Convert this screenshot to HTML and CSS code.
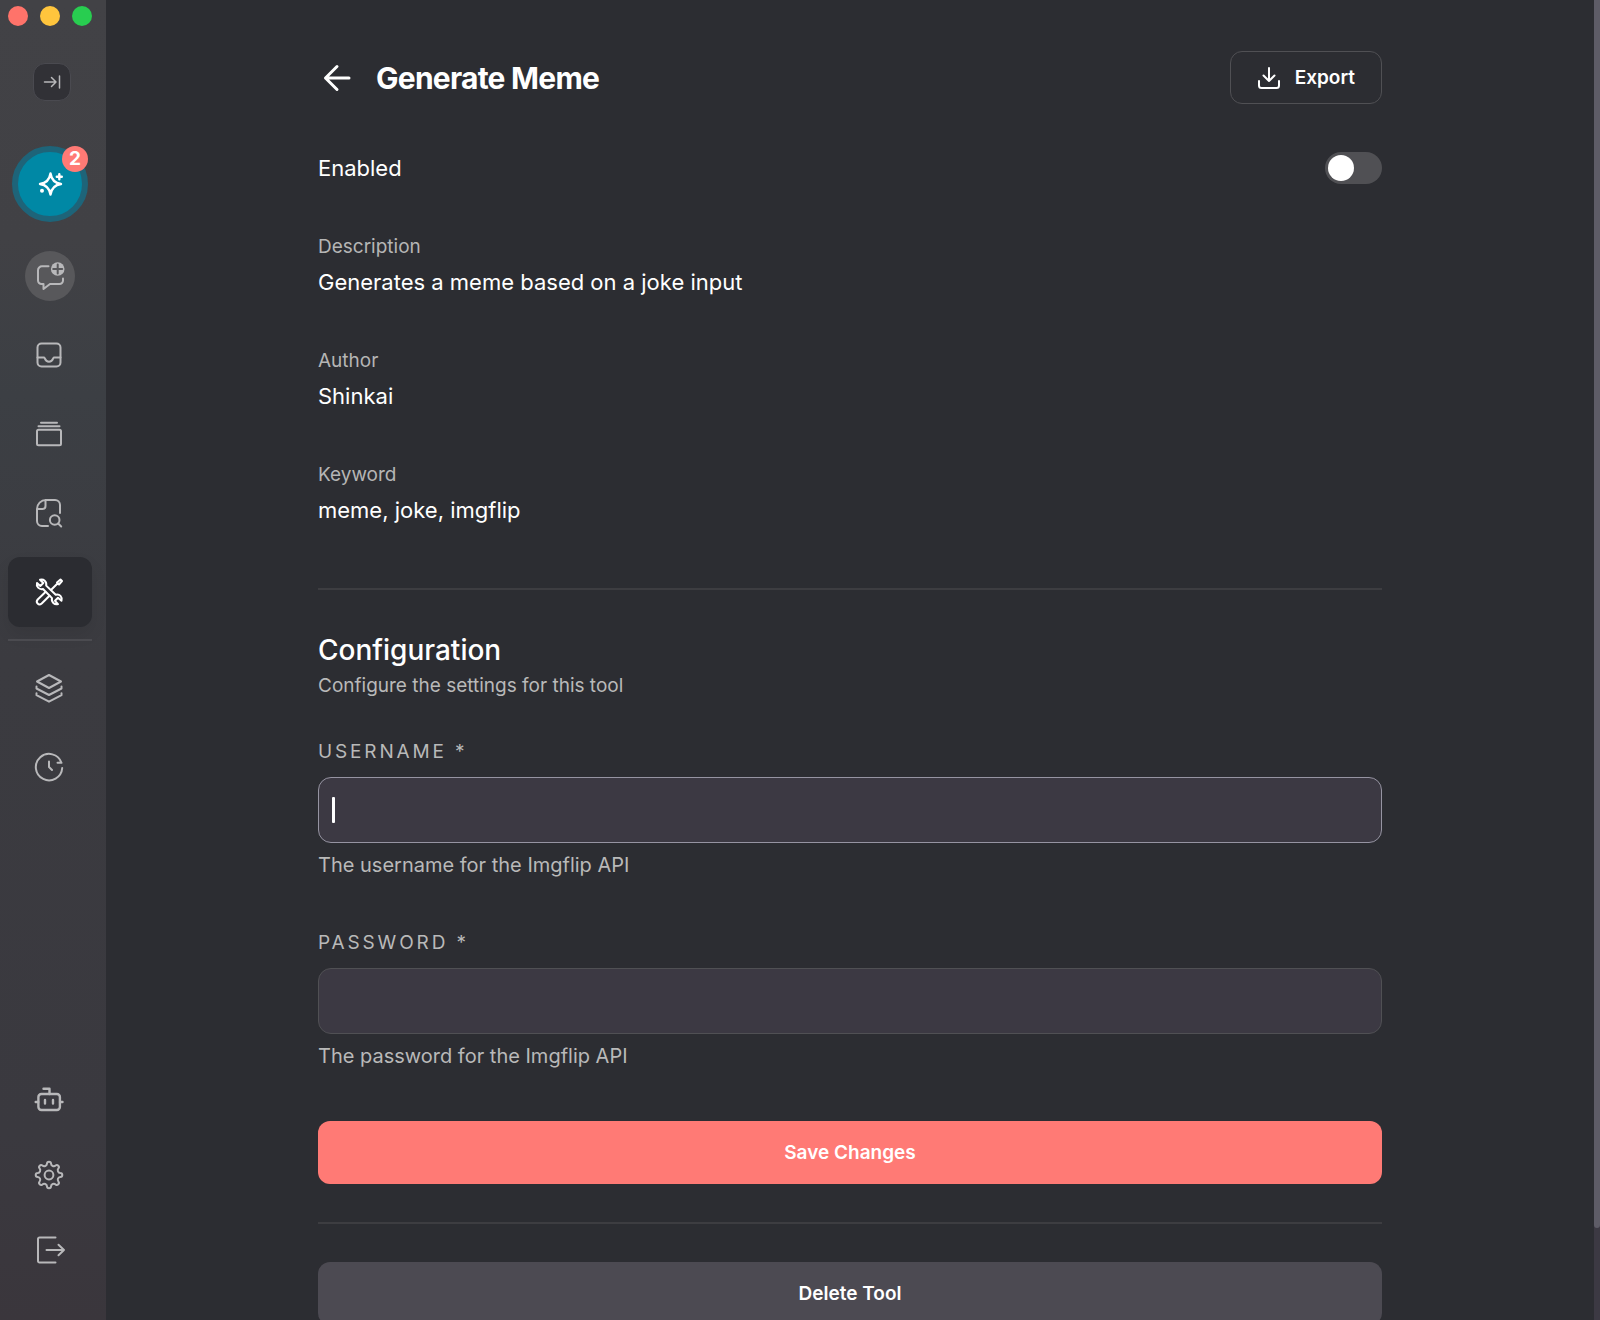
FILE: index.html
```html
<!DOCTYPE html>
<html lang="en">
	<head>
		<meta charset="UTF-8">
		<meta name="viewport" content="width=device-width, initial-scale=1">
		<title>Generate Meme</title>
		<link rel="stylesheet" href="styles.css">
	</head>
	<body>
		<div class="app">
			<aside class="sidebar">
				<div class="lights">
					<span class="light red"></span>
					<span class="light yellow"></span>
					<span class="light green"></span>
				</div>
				<button class="expand" type="button" aria-label="Expand sidebar">
					<svg width="18" height="18" viewBox="0 0 18 18"><path d="M1.5 9H13M8.5 4.5 13 9l-4.5 4.5M16.5 3v12"/></svg>
				</button>
				<button class="agent" type="button" aria-label="Quick ask">
					<svg class="icon" viewBox="0 0 28 28"><path d="M14.5 3.5c1 6.5 4 9.5 10.500 10.500-6.500 1-9.500 4-10.500 10.500-1-6.500-4-9.500-10.500-10.500 6.500-1 9.500-4 10.500-10.500zM23.300 4.200v5M20.800 6.700h5"/><circle class="dot" cx="6" cy="20.700" r="2"/></svg>
					<span class="badge">2</span>
				</button>
				<button class="chat" type="button" aria-label="New chat">
					<svg class="icon" viewBox="0 0 28 28"><path d="M12.500 4.300H6a4 4 0 0 0-4 4V18.500a3.500 3.500 0 0 0 3.500 3.500H7.500v5l6.500-5h9.500a3.500 3.500 0 0 0 3.500-3.500v-2"/><circle class="dot" cx="21.700" cy="7" r="6.800"/><path class="plus" d="M21.700 2.500v9M17.200 7h9"/></svg>
				</button>
				<nav class="menu">
					<a href="#" aria-label="Inbox">
						<svg class="icon" viewBox="0 0 28 28"><rect x="2.500" y="2.500" width="23" height="23" rx="4"/><path d="M2.500 16.500H9.200c.8 0 .6 4.200 4.800 4.200s4-4.200 4.800-4.200h6.700"/></svg>
					</a>
					<a href="#" aria-label="Library">
						<svg class="icon" viewBox="0 0 28 28"><rect x="2" y="9.800" width="24" height="15.500" rx="1.500"/><path d="M3.500 6.200h21M6 2.700h16"/></svg>
					</a>
					<a href="#" aria-label="File search">
						<svg class="icon" viewBox="0 0 28 28"><path d="M25 14V6a5 5 0 0 0-5-5H11C6 1 2 5 2 10v12a5 5 0 0 0 5 5h6M2 10h5.500a3 3 0 0 0 3-3V1"/><circle cx="19.700" cy="21" r="4.800"/><path d="M23.200 24.500l3 3"/></svg>
					</a>
					<a class="active" href="#" aria-label="Tools" aria-current="page">
						<svg class="icon" viewBox="0 0 28 28"><path d="M5 1.800c3.500-1 7 1.500 6.200 5.800l9.500 9.200c4-1 6.800 2 5.800 6l-3.500-3-3 3 3 3.300c-3.500 1-7-2-6-6L8 11c-4 .8-7-2.400-6-6l3.300 3 3-3z"/><path d="M16.200 11.800l6.300-6.300M22 4.500l3.500-3 1.500 1.500-3 3.500zM10.500 14l-7.800 7.500c-2.500 3 1 6.500 4 4l7.800-7.800"/></svg>
					</a>
				</nav>
				<hr class="menu-line">
				<nav class="menu">
					<a href="#" aria-label="Models">
						<svg class="icon" viewBox="0 0 28 28"><path d="M14 1l12 6.500-12 6.500L2 7.500zM1.500 12.500V14.500L14 21l12.500-6.500V12.500M1.500 19.200v2L14 27.700l12.500-6.500v-2"/></svg>
					</a>
					<a href="#" aria-label="Scheduled tasks">
						<svg class="icon" viewBox="0 0 28 28"><path d="M27.200 15A13.200 13.200 0 1 1 26.500 9.800H22.500M14 8.500V14l3 3"/></svg>
					</a>
				</nav>
				<nav class="menu menu-bottom">
					<a href="#" aria-label="AI models">
						<svg class="icon" viewBox="0 0 28 28"><g class="bold"><rect x="3.400" y="8" width="21.500" height="16" rx="3"/><path d="M8.500 2.800H14.500V8M.7 16h2.500M25 16h2.500M10 14v3.500M18 14v3.500"/></g></svg>
					</a>
					<a href="#" aria-label="Settings">
						<svg class="icon" viewBox="-14 -14 28 28"><path d="M-2-11.300A2 2 0 0 1 2-11.300A2.800 2.800 0 0 0 6.580-9.400A2 2 0 0 1 9.400-6.580A2.800 2.800 0 0 0 11.300-2A2 2 0 0 1 11.300 2A2.800 2.800 0 0 0 9.400 6.580A2 2 0 0 1 6.580 9.400A2.800 2.800 0 0 0 2 11.300A2 2 0 0 1-2 11.300A2.800 2.800 0 0 0-6.580 9.400A2 2 0 0 1-9.400 6.580A2.800 2.800 0 0 0-11.300 2A2 2 0 0 1-11.300-2A2.800 2.800 0 0 0-9.400-6.580A2 2 0 0 1-6.580-9.400A2.800 2.800 0 0 0-2-11.300z"/><circle r="4.400"/></svg>
					</a>
					<a href="#" aria-label="Disconnect">
						<svg class="icon" viewBox="0 0 28 28"><path d="M20.500 1.500H4.500a1.500 1.500 0 0 0-1.500 1.500V25a1.500 1.500 0 0 0 1.500 1.500h16M11.500 14H29M23.500 8.800L29 14l-5.500 5.200"/></svg>
					</a>
				</nav>
			</aside>

			<main class="main">
				<div class="page">
					<header class="header">
						<a class="back" href="#" aria-label="Back">
							<svg width="28" height="28" viewBox="0 0 28 28"><path d="M26 14H2.500M14 2.500 2.500 14 14 25.500"/></svg>
						</a>
						<h1>Generate Meme</h1>
						<button class="export" type="button">
							<svg width="24" height="24" viewBox="0 0 24 24"><path d="M12 2v13M6.500 9.500 12 15l5.500-5.500M2 15v4.500a2.500 2.500 0 0 0 2.500 2.500h15a2.500 2.500 0 0 0 2.500-2.500V15"/></svg>
							Export
						</button>
					</header>

					<div class="enabled">
						<label for="enabled">Enabled</label>
						<input class="switch" type="checkbox" role="switch" id="enabled">
					</div>

					<dl class="info">
						<div>
							<dt>Description</dt>
							<dd>Generates a meme based on a joke input</dd>
						</div>
						<div>
							<dt>Author</dt>
							<dd>Shinkai</dd>
						</div>
						<div>
							<dt>Keyword</dt>
							<dd>meme, joke, imgflip</dd>
						</div>
					</dl>

					<hr class="line">

					<form class="config">
						<div class="config-title">
							<h2>Configuration</h2>
							<p>Configure the settings for this tool</p>
						</div>
						<div class="field">
							<label for="username">USERNAME *</label>
							<div class="box focused">
								<input type="text" id="username" aria-describedby="username-help">
								<span class="caret"></span>
							</div>
							<p id="username-help">The username for the Imgflip API</p>
						</div>
						<div class="field">
							<label for="password">PASSWORD *</label>
							<div class="box">
								<input type="text" id="password" aria-describedby="password-help">
							</div>
							<p id="password-help">The password for the Imgflip API</p>
						</div>
						<button class="btn save" type="submit">Save Changes</button>
					</form>

					<hr class="line line-small">

					<button class="btn delete" type="button">Delete Tool</button>
				</div>
			</main>
			<div class="scrollbar"><div class="thumb"></div></div>
		</div>
	</body>
</html>
```
FILE: styles.css
```css
*{
	margin: 0;
	padding: 0;
	box-sizing: border-box;
}
body{
	background: #2c2d32;
	color: #fff;
	font-family: Inter, "Liberation Sans", sans-serif;
	font-size: 19px;
	line-height: 26px;
}
button, input{
	font: inherit;
	color: inherit;
	border: none;
}
svg{
	display: block;
	fill: none;
	stroke: currentColor;
	stroke-width: 2;
	stroke-linecap: round;
	stroke-linejoin: round;
	overflow: visible;
}
.app{
	display: flex;
	height: 100vh;
	overflow: hidden;
}

/* sidebar */
.sidebar{
	flex: none;
	display: flex;
	flex-direction: column;
	align-items: center;
	width: 106px;
	padding: 6px 14px 37px 8px;
	background: linear-gradient(#424246 0%, #414145 18%, #3c3f44 30%, #3b3b40 50%, #3a393f 86%, #3a363c 100%);
	color: #b8b8ba;
}
.lights{
	display: flex;
	gap: 12px;
}
.light{
	width: 20px;
	height: 20px;
	border-radius: 50%;
}
.red{
	background: #ff736a;
}
.yellow{
	background: #ffc53d;
}
.green{
	background: #28cd50;
}
.expand{
	display: grid;
	place-items: center;
	width: 38px;
	height: 38px;
	margin-top: 37px;
	margin-left: 4px;
	border: 1px solid #4a4a50;
	border-radius: 12px;
	background: #313136;
}
.expand svg{
	stroke-width: 1.5;
}
.agent{
	position: relative;
	display: grid;
	place-items: center;
	width: 76px;
	height: 76px;
	margin-top: 45px;
	border: 6px solid #1e6479;
	border-radius: 50%;
	background: #0088a5;
	color: #fff;
}
.badge{
	position: absolute;
	top: -6px;
	right: -6px;
	width: 26px;
	height: 26px;
	border-radius: 50%;
	background: #ff7a75;
	font-weight: 700;
	line-height: 26px;
	text-align: center;
}
.chat{
	display: grid;
	place-items: center;
	width: 50px;
	height: 50px;
	margin-top: 29px;
	margin-bottom: 19px;
	border-radius: 50%;
	background: #58585b;
}
.icon{
	width: 28px;
	height: 28px;
	stroke-width: 2;
}
.agent .icon{
	stroke-width: 2.4;
}
.icon .dot{
	fill: currentColor;
	stroke: none;
}
.icon .plus{
	stroke: #58585b;
}
.icon .bold{
	stroke-width: 2.4;
}
.menu{
	display: flex;
	flex-direction: column;
	gap: 9px;
	width: 100%;
}
.menu a{
	display: grid;
	place-items: center;
	height: 70px;
	padding-right: 2px;
	border-radius: 12px;
	color: inherit;
}
.menu .active{
	background: #2b2c31;
	color: #fff;
	box-shadow: 0 8px 16px rgba(0,0,0,0.08);
}
.menu-line{
	width: 100%;
	height: 2px;
	margin: 12px 0;
	border: none;
	background: #4b4b50;
}
.menu-bottom{
	margin-top: auto;
}
.menu-bottom a{
	height: 66px;
}

/* content */
.main{
	flex: 1;
	overflow-y: auto;
	scrollbar-width: none;
}
.page{
	max-width: 1064px;
	margin: 0 auto;
	padding: 51px 0 70px;
}
.header{
	display: flex;
	align-items: center;
	gap: 20px;
}
.back{
	display: grid;
	place-items: center;
	width: 38px;
	height: 38px;
	color: #fff;
}
.back svg{
	stroke-width: 3;
}
.header h1{
	flex: 1;
	font-size: 30px;
	line-height: 40px;
	font-weight: 700;
	letter-spacing: -0.025em;
}
.export{
	display: flex;
	align-items: center;
	gap: 14px;
	height: 53px;
	padding: 0 26px;
	border: 1px solid #505054;
	border-radius: 12px;
	background: none;
	font-weight: 600;
}
.enabled{
	display: flex;
	align-items: center;
	justify-content: space-between;
	height: 32px;
	margin: 48px 0 50px;
	font-size: 22px;
}
.switch{
	appearance: none;
	display: flex;
	width: 57px;
	height: 32px;
	padding: 3px;
	border-radius: 16px;
	background: #505054;
}
.switch::before{
	content: "";
	width: 26px;
	height: 26px;
	border-radius: 50%;
	background: #fff;
}
.switch:checked{
	justify-content: flex-end;
	background: #ff7a75;
}
.info{
	display: flex;
	flex-direction: column;
	gap: 50px;
}
.info dt{
	margin-bottom: 6px;
	color: #b5b5b5;
}
.info dd{
	font-size: 22px;
	line-height: 32px;
}
.line{
	height: 2px;
	margin: 62px 0 42px;
	border: none;
	background: #3d3d41;
}
.line-small{
	margin: 38px 0;
}
.config-title{
	margin-bottom: 40px;
}
.config-title h2{
	margin-bottom: 5px;
	font-size: 28px;
	line-height: 36px;
	font-weight: 500;
}
.config-title p, .field{
	color: #b9b9b9;
}
.field{
	margin-bottom: 51px;
}
.field label{
	display: block;
	margin-bottom: 12px;
	letter-spacing: 0.15em;
}
.box{
	position: relative;
	margin-bottom: 8px;
}
.box input{
	display: block;
	width: 100%;
	height: 66px;
	padding: 0 14px;
	border: 1px solid #505054;
	border-radius: 13px;
	background: #3c3943;
	color: #fff;
	outline: none;
}
.focused input{
	border-color: #9694a2;
}
.caret{
	position: absolute;
	left: 14px;
	top: 20px;
	width: 3px;
	height: 26px;
	border-radius: 1px;
	background: #fff;
}
.field p{
	font-size: 20px;
	line-height: 28px;
}
.btn{
	display: block;
	width: 100%;
	height: 63px;
	border-radius: 12px;
	font-weight: 600;
}
.save{
	background: #ff7a75;
}
.delete{
	background: #4c4a52;
}

.scrollbar{
	flex: none;
	width: 6px;
	background: #3c3943;
}
.thumb{
	height: 93%;
	border-radius: 0 0 6px 6px;
	background: #5e5c67;
}
```
